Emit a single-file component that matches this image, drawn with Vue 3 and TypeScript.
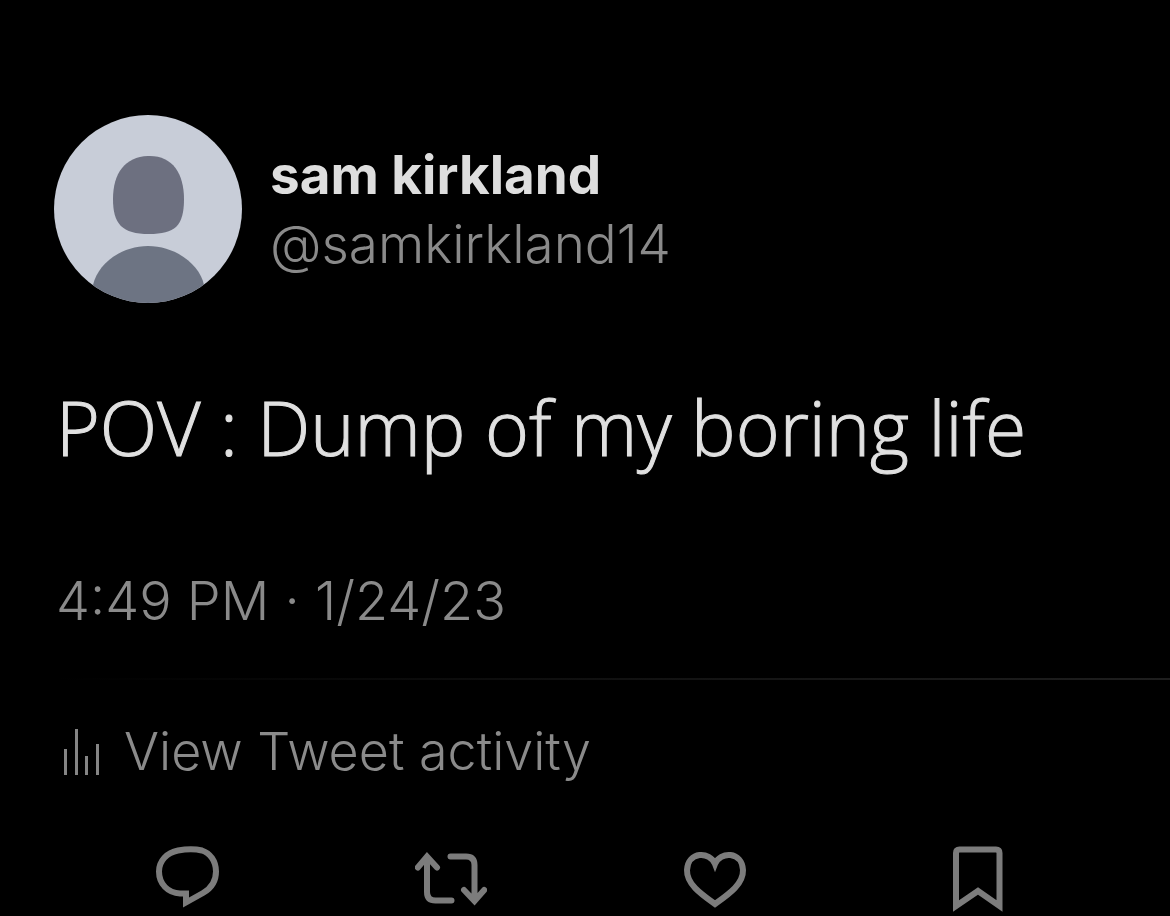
<script setup lang="ts">
interface Action {
  label: string
  path: string
}

const tweet = {
  name: 'sam kirkland',
  handle: '@samkirkland14',
  text: 'POV : Dump of my boring life',
  time: '4:49 PM · 1/24/23',
}

const actions: Action[] = [
  {
    label: 'Reply',
    path: 'M26 6.500C34 5 44 5 50 6.500C58 9 64 17 64 27.500C64 37.500 59 44.500 51 49L34 58.500V49.500H28C16 49 7 40 7 27.500C7 17 15 8.500 26 6.500Z',
  },
  {
    label: 'Retweet',
    path: 'M2.8 23.5L12 12.5L22 23.5M12 14V48Q12 56.5 20.500 56.5H36.500M35.500 12.5H51Q59.500 12.5 59.500 21V56M49 46L59.500 57L69.200 46',
  },
  {
    label: 'Like',
    path: 'M36 20C31 7 9 7 8 26C7.500 40 22 50 36 60C50 50 64.500 40 64 26C63 7 41 7 36 20Z',
  },
  {
    label: 'Bookmark',
    path: 'M14 62V9Q14 5.500 17.500 5.500H54Q57.500 5.500 57.500 9V62L36 47Z',
  },
]
</script>

<template>
  <article class="tweet">
    <header class="author">
      <svg class="avatar" viewBox="0 0 188 188" role="img" aria-label="Profile picture">
        <defs>
          <clipPath id="avatar-circle"><circle cx="94" cy="94" r="94" /></clipPath>
        </defs>
        <g clip-path="url(#avatar-circle)">
          <rect width="188" height="188" fill="#c8cdd8" />
          <path
            d="M94 41C118 40 130 58 130 84C130 111 121 119 95 119C68 119 59 109 59 84C59 58 71 42 94 41Z"
            fill="#6d7080"
          />
          <path d="M39 188V170C44 148 68 131 94 131C122 131 146 150 150 170V188Z" fill="#6d7483" />
        </g>
      </svg>
      <div class="names">
        <strong class="name">{{ tweet.name }}</strong>
        <span class="handle">{{ tweet.handle }}</span>
      </div>
    </header>

    <p class="text">{{ tweet.text }}</p>
    <time class="time" datetime="2023-01-24T16:49">{{ tweet.time }}</time>

    <hr class="divider" />

    <a class="activity" href="#">
      <svg class="bars" viewBox="0 0 44 50" aria-hidden="true">
        <path d="M5.500 22V48M16.500 2V48M26.500 29V48M37.500 17V48" />
      </svg>
      <span>View Tweet activity</span>
    </a>

    <footer class="actions">
      <button v-for="a in actions" :key="a.label" type="button" class="action" :aria-label="a.label">
        <svg class="icon" viewBox="0 0 72 72" aria-hidden="true"><path :d="a.path" /></svg>
      </button>
    </footer>
  </article>
</template>

<style>
html,
body {
  background: #000;
}
body {
  margin: 0;
}
</style>

<style scoped>
.tweet {
  box-sizing: border-box;
  min-height: 100vh;
  padding: 115px 0 0 56px;
  overflow: hidden;
  background: #000;
  color: #8a8a8a;
  font-family: Inter, "Liberation Sans", sans-serif;
  font-weight: 300;
}
.author {
  display: flex;
  align-items: center;
  gap: 28px;
  margin-left: -2px;
}
.avatar {
  flex: none;
  width: 188px;
  height: 188px;
}
.names {
  display: flex;
  flex-direction: column;
  padding-top: 2px;
  font-size: 53px;
  line-height: 69px;
}
.name {
  color: #dedede;
  font-weight: 700;
}
.text {
  margin: 74px 0 94px;
  color: #e0e0e0;
  font-family: "Open Sans", "Noto Sans", sans-serif;
  font-size: 75px;
  line-height: 100px;
  -webkit-text-stroke: 1px currentColor;
}
.time {
  display: block;
  font-size: 54px;
  line-height: 60px;
}
.divider {
  height: 2px;
  margin: 47px 0 42px;
  border: 0;
  background: linear-gradient(to right, #000, #0a0a0a 30%, #141414 60%, #1e1e1e);
}
.activity {
  display: flex;
  align-items: center;
  gap: 20px;
  margin-left: 4px;
  color: inherit;
  font-size: 52px;
  line-height: 60px;
  text-decoration: none;
}
.bars {
  width: 44px;
  height: 50px;
  fill: none;
  stroke: #858585;
  stroke-width: 3;
}
.actions {
  display: grid;
  grid-template-columns: repeat(4, 1fr);
  margin: 62px 60px 0 0;
}
.action {
  display: flex;
  justify-content: center;
  padding: 0;
  border: 0;
  background: none;
  color: #7c7c7c;
  cursor: pointer;
}
.icon {
  width: 72px;
  height: 72px;
  fill: none;
  stroke: currentColor;
  stroke-width: 6;
}
.action:nth-child(2) .icon {
  stroke-linecap: round;
}
</style>
